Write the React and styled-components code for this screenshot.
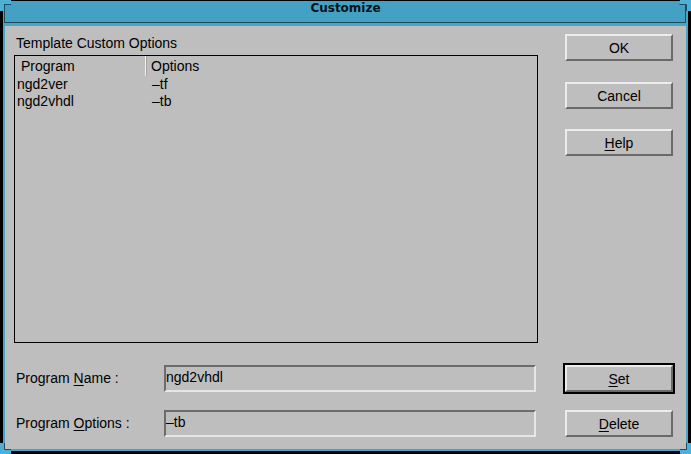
import React from 'react';
import styled, { createGlobalStyle } from 'styled-components';

const Global = createGlobalStyle`
  html, body { margin: 0; padding: 0; background: #000; }
  body { width: 691px; height: 454px; overflow: hidden; font-family: "Liberation Sans", Arial, sans-serif; }
  * { box-sizing: border-box; }
`;

const Screen = styled.div`
  position: relative;
  width: 691px;
  height: 454px;
  background: #000;
  padding: 1px 3px 3px 3px;
`;

const Frame = styled.div`
  width: 685px;
  height: 450px;
  background: #48a5c8;
  padding: 0 2px 2px 2px;
  display: flex;
  flex-direction: column;
`;

const TitleBar = styled.div`
  height: 22px;
  line-height: 21px;
  text-align: center;
  font: bold 12px "DejaVu Sans", Verdana, sans-serif;
  color: #06121a;
  background: #45a1c3;
  border-bottom: 1px solid #1b4c60;
  box-shadow: -1px 0 0 #1b4c60, inset -1px 0 0 #1b4c60;
  margin-bottom: 3px;
`;

const Content = styled.div`
  flex: 1;
  background: #bebebe;
  padding: 8px 13px 0 9px;
  display: flex;
  flex-direction: column;
  font: 14px "Liberation Sans", Arial, sans-serif;
  color: #000;
`;

const TopSection = styled.div`
  display: flex;
  gap: 27px;
  height: 309px;
`;

const ListColumn = styled.div`
  width: 524px;
  display: flex;
  flex-direction: column;
`;

const GroupLabel = styled.div`
  margin-top: 1px;
  line-height: 16px;
  padding-left: 2px;
`;

const ListBox = styled.div`
  margin-top: 4px;
  height: 288px;
  border: 1px solid #000;
`;

const ListHeader = styled.div`
  display: grid;
  grid-template-columns: 130px 1fr;
  height: 20px;
  line-height: 20px;
`;

const HeaderCell = styled.div`
  padding-left: ${p => p.$pl}px;
  ${p => p.$divider ? 'border-left: 1px solid #f2f2f2; box-shadow: inset 1px 0 0 #a4a4a4;' : ''}
`;

const ListRow = styled.div`
  display: grid;
  grid-template-columns: 130px 1fr;
  line-height: 17px;
`;

const Cell = styled.div`
  padding-left: ${p => p.$pl}px;
  white-space: pre;
`;

const ButtonColumn = styled.div`
  display: flex;
  flex-direction: column;
  width: 108px;
`;

const Button = styled.button`
  width: 108px;
  height: 27px;
  margin: ${p => p.$mt || 0}px 0 0 0;
  padding: 0;
  background: #bebebe;
  border: 2px solid;
  border-color: #ececec #6a6a6a #6a6a6a #ececec;
  font: 14px "Liberation Sans", Arial, sans-serif;
  color: #000;
  outline: ${p => (p.$default ? '2px solid #000' : 'none')};
  flex-shrink: 0;
  u { text-underline-offset: 2px; }
`;

const FormRow = styled.div`
  display: flex;
  align-items: center;
  height: 27px;
  margin-top: ${p => p.$mt}px;
`;

const FieldLabel = styled.div`
  width: 150px;
  padding-left: 2px;
  line-height: 27px;
  u { text-underline-offset: 2px; }
`;

const Field = styled.div`
  width: 372px;
  height: 27px;
  border: 2px solid;
  border-color: #6c6c6c #e6e6e6 #e6e6e6 #6c6c6c;
  line-height: 20px;
  padding: 0;
  white-space: pre;
`;

const Spacer = styled.div`
  flex: 1;
`;

const Corner = styled.svg`
  position: absolute;
  width: 12px;
  height: 12px;
  ${p => p.$pos}
`;

function CornerMark({ pos, points, dark }) {
  return (
    <Corner $pos={pos} viewBox="0 0 12 12">
      <polygon points={points} fill="#4eb0d6" />
      <polyline points={dark} fill="none" stroke="#1b4c60" strokeWidth="1" />
    </Corner>
  );
}

export default function App() {
  return (
    <>
      <Global />
      <Screen>
        <Frame>
          <TitleBar>Customize</TitleBar>
          <Content>
            <TopSection>
              <ListColumn>
                <GroupLabel>Template Custom Options</GroupLabel>
                <ListBox>
                  <ListHeader>
                    <HeaderCell $pl={6}>Program</HeaderCell>
                    <HeaderCell $pl={5} $divider>Options</HeaderCell>
                  </ListHeader>
                  <ListRow>
                    <Cell $pl={2}>ngd2ver</Cell>
                    <Cell $pl={7}>–tf</Cell>
                  </ListRow>
                  <ListRow>
                    <Cell $pl={2}>ngd2vhdl</Cell>
                    <Cell $pl={7}>–tb</Cell>
                  </ListRow>
                </ListBox>
              </ListColumn>
              <ButtonColumn>
                <Button>OK</Button>
                <Button $mt={21}>Cancel</Button>
                <Button $mt={20}><u>H</u>elp</Button>
              </ButtonColumn>
            </TopSection>
            <FormRow $mt={22}>
              <FieldLabel>Program <u>N</u>ame :</FieldLabel>
              <Field>ngd2vhdl</Field>
              <Spacer />
              <Button $default><u>S</u>et</Button>
            </FormRow>
            <FormRow $mt={18}>
              <FieldLabel>Program <u>O</u>ptions :</FieldLabel>
              <Field>–tb</Field>
              <Spacer />
              <Button><u>D</u>elete</Button>
            </FormRow>
          </Content>
        </Frame>
        <CornerMark pos="left:0;top:0;" points="0,0 11,0 11,4 4,4 4,11 0,11" dark="11,4.5 4.5,4.5 4.5,11" />
        <CornerMark pos="right:0;top:0;" points="1,0 12,0 12,11 8,11 8,4 1,4" dark="0.5,4.5 7.5,4.5 7.5,11" />
        <CornerMark pos="left:0;bottom:0;" points="0,1 4,1 4,7 11,7 11,12 0,12" dark="4.5,1 4.5,7.5 11,7.5" />
        <CornerMark pos="right:0;bottom:0;" points="8,1 12,1 12,12 1,12 1,8 8,8" dark="7.5,1 7.5,7.5 1,7.5" />
      </Screen>
    </>
  );
}
